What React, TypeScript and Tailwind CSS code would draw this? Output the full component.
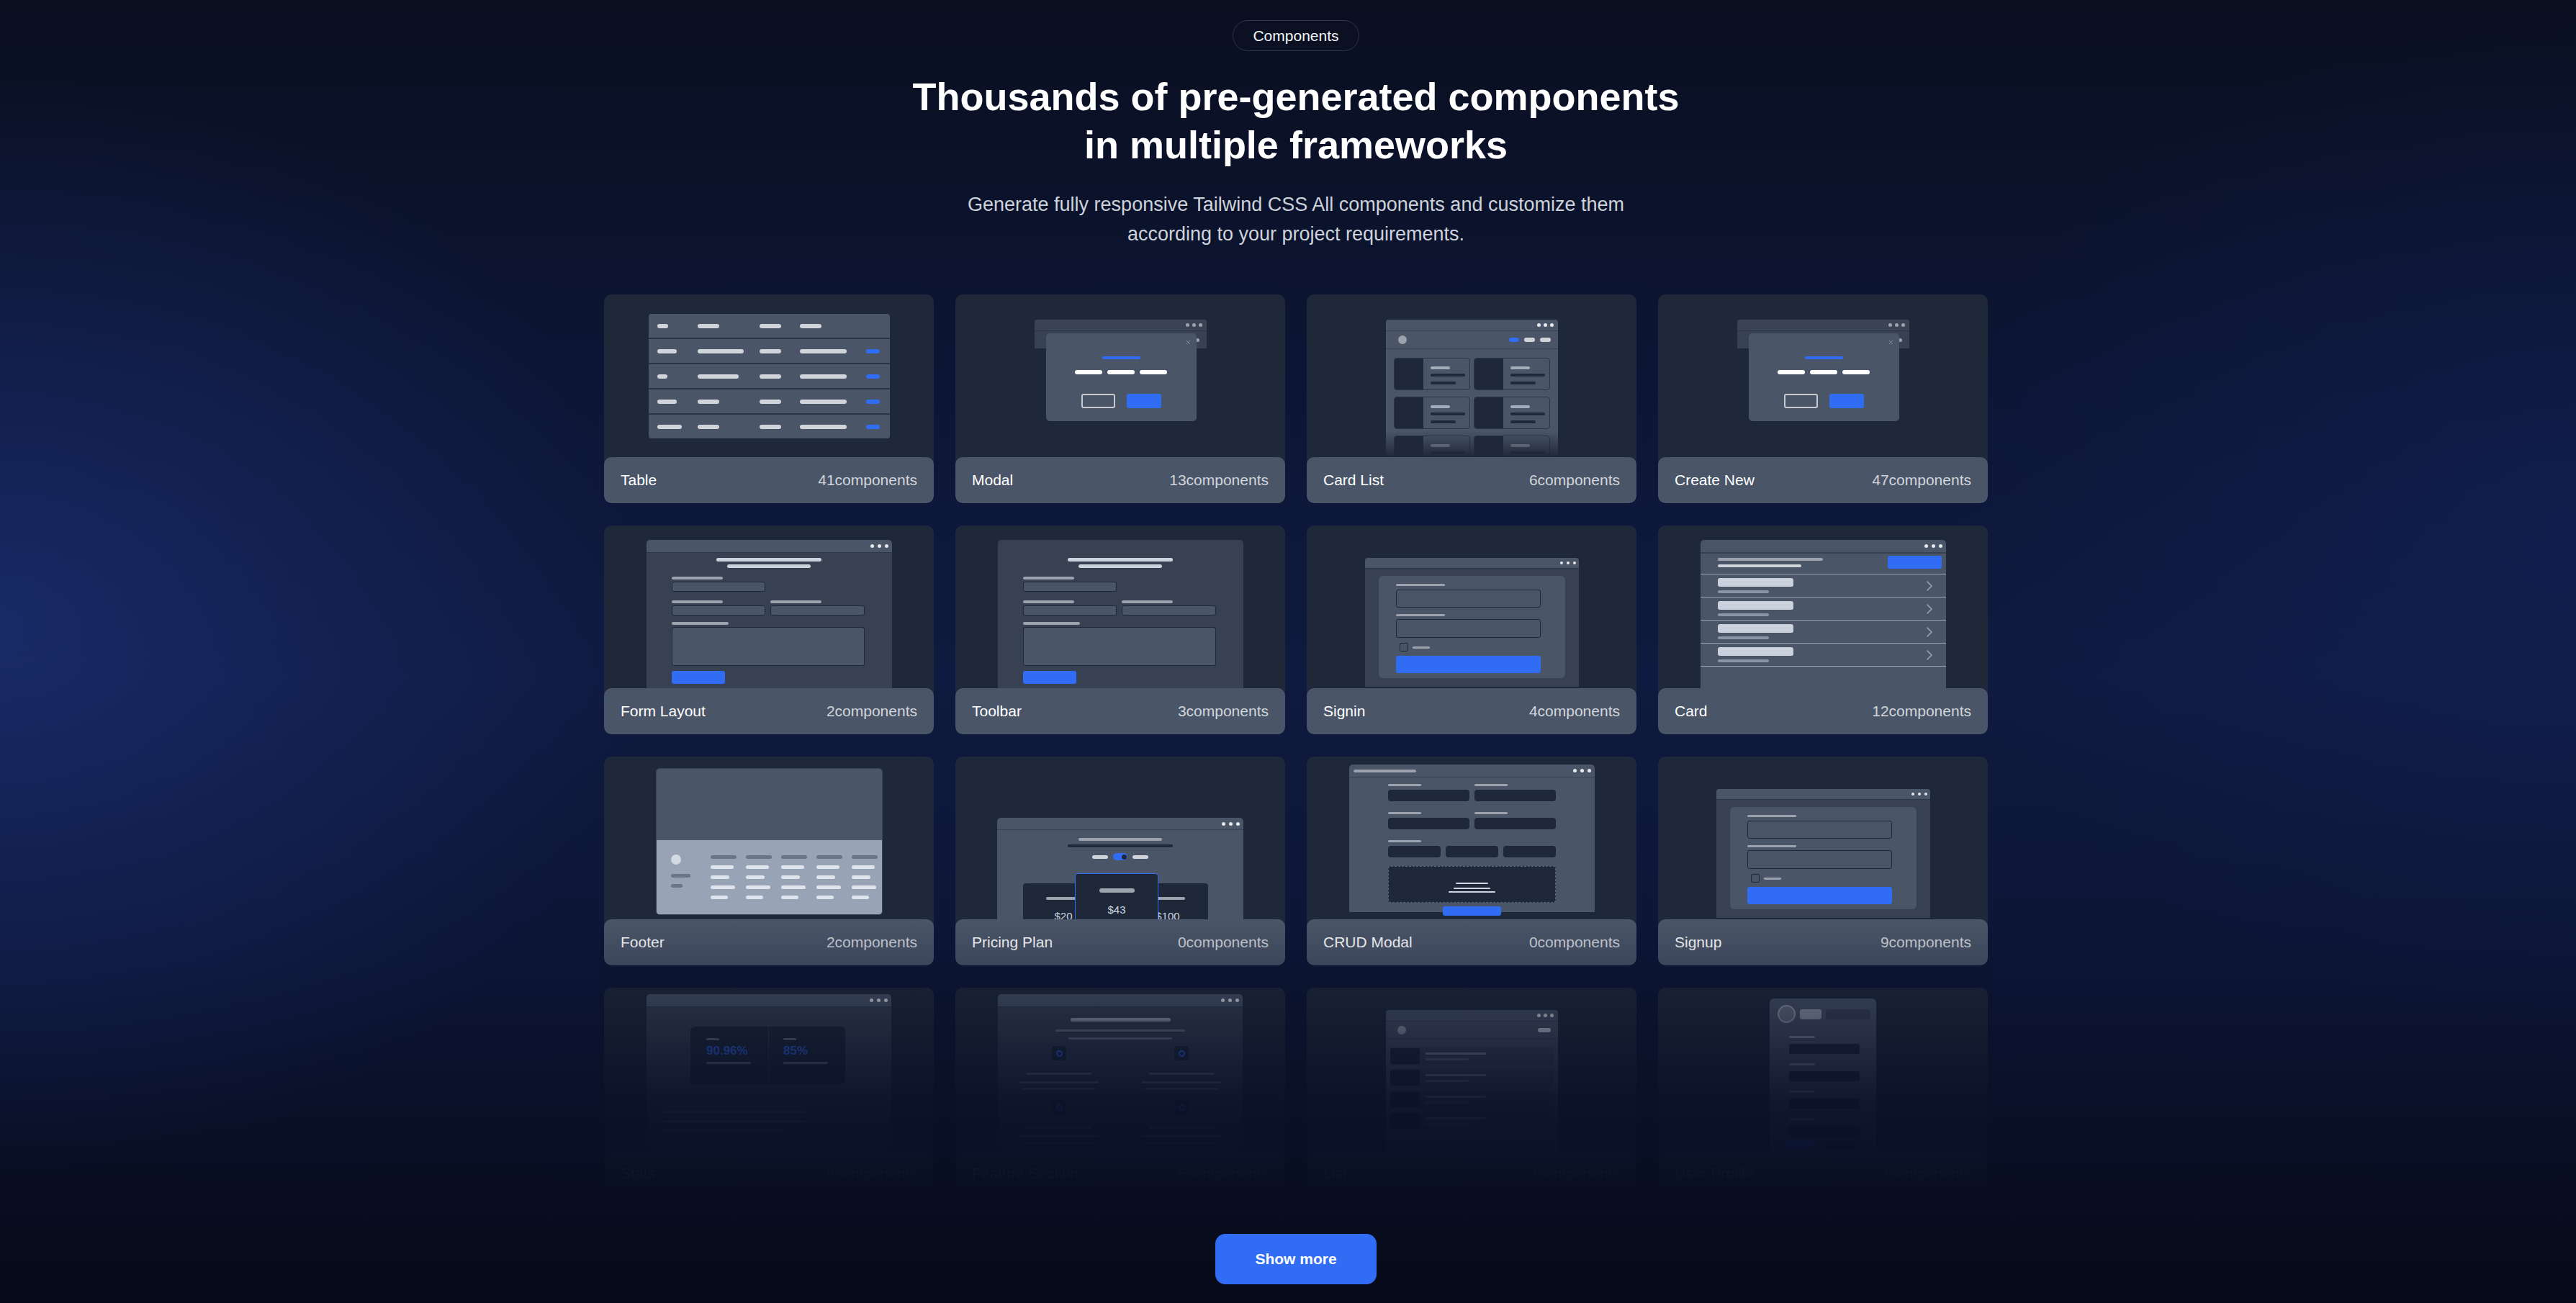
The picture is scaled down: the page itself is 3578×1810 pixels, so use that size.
import type { ReactNode } from 'react';
import { ChevronRight, X } from 'lucide-react';

function TitleBar({ className, dot }: { className: string; dot: string }) {
  return (
    <div className={`flex shrink-0 items-center justify-end ${className}`}>
      <span className={`rounded-full ${dot}`} />
      <span className={`rounded-full ${dot}`} />
      <span className={`rounded-full ${dot}`} />
    </div>
  );
}

function Card({ name, count, children }: { name: string; count: number; children: ReactNode }) {
  return (
    <div className="flex h-[290px] flex-col overflow-hidden rounded-[10px] bg-[#1f2838]">
      <div className="relative h-[226px] shrink-0 overflow-hidden">{children}</div>
      <div className="flex h-[64px] items-center justify-between rounded-[10px] bg-[#4a5568] px-[23px] text-[21px]">
        <span className="text-white">{name}</span>
        <span className="text-[#d1d5db]">{count}components</span>
      </div>
    </div>
  );
}

const tableRows = [
  ['w-[15px]', 'w-[30px]', 'w-[30px]', 'w-[30px]', ''],
  ['w-[27px]', 'w-[64px]', 'w-[30px]', 'w-[65px]', 'w-[19px]'],
  ['w-[14px]', 'w-[57px]', 'w-[30px]', 'w-[65px]', 'w-[19px]'],
  ['w-[27px]', 'w-[30px]', 'w-[30px]', 'w-[65px]', 'w-[19px]'],
  ['w-[34px]', 'w-[30px]', 'w-[30px]', 'w-[65px]', 'w-[19px]'],
];

function TablePreview() {
  return (
    <div className="flex justify-center pt-[27px]">
      <div className="flex w-[335px] flex-col gap-[2px] overflow-hidden rounded-[4px] bg-[#2b3444]">
        {tableRows.map((row, i) => (
          <div key={i} className="grid h-[33px] grid-cols-[56px_86px_56px_92px_1fr] items-center bg-[#4a5568] pl-[12px]">
            {row.map((w, j) => (
              <span key={j} className={w ? `h-[6px] rounded-full ${j === 4 ? 'bg-[#316cf4]' : 'bg-[#d1d5db]'} ${w}` : ''} />
            ))}
          </div>
        ))}
      </div>
    </div>
  );
}

function ModalPreview() {
  return (
    <div className="pt-[35px]">
      <div className="relative mx-auto w-[239px]">
        <div className="overflow-hidden rounded-t-[4px] bg-[#374151]">
          <TitleBar className="h-[15px] gap-[4px] bg-[#3a4354] pr-[6px]" dot="h-[5px] w-[5px] bg-[#9ca3af]" />
          <div className="h-px bg-[#2b3444]" />
          <div className="flex h-[24px] justify-end pr-[10px] pt-[10px]">
            <span className="h-[5px] w-[5px] rounded-full bg-[#9ca3af]" />
          </div>
        </div>
        <div className="absolute left-[16px] top-[19px] flex h-[122px] w-[209px] flex-col items-center rounded-[5px] bg-[#4a5568] pt-[32px]">
          <X className="absolute right-[7px] top-[8px] h-[9px] w-[9px] text-[#9ca3af]" strokeWidth={2} />
          <span className="h-[4px] w-[53px] rounded-full bg-[#316cf4]" />
          <div className="mt-[15px] flex gap-[7px]">
            <span className="h-[6px] w-[38px] rounded-full bg-white" />
            <span className="h-[6px] w-[38px] rounded-full bg-white" />
            <span className="h-[6px] w-[38px] rounded-full bg-white" />
          </div>
          <div className="mt-[27px] flex gap-[16px]">
            <span className="h-[20px] w-[47px] rounded-[3px] border-2 border-[#c5cad3]" />
            <span className="h-[20px] w-[48px] rounded-[3px] bg-[#316cf4]" />
          </div>
        </div>
      </div>
    </div>
  );
}

function MiniCard() {
  return (
    <div className="flex h-[45px] overflow-hidden rounded-[4px] border border-[#2d3646] bg-[#4a5568]">
      <div className="w-[40px] shrink-0 bg-[#1f2838]" />
      <div className="flex flex-col pl-[10px] pt-[11px]">
        <span className="h-[4px] w-[27px] rounded-full bg-[#a3acb9]" />
        <span className="mt-[6px] h-[4px] w-[48px] rounded-full bg-[#1f2838]" />
        <span className="mt-[7px] h-[4px] w-[35px] rounded-full bg-[#1f2838]" />
      </div>
    </div>
  );
}

function CardListPreview() {
  return (
    <div className="h-full pt-[35px]">
      <div className="mx-auto w-[239px] overflow-hidden rounded-t-[4px] bg-[#4a5568]">
        <TitleBar className="h-[15px] gap-[4px] pr-[6px]" dot="h-[5px] w-[5px] bg-[#e5e7eb]" />
        <div className="h-px bg-[#374151]" />
        <div className="flex h-[24px] items-center justify-between pl-[17px] pr-[10px]">
          <span className="h-[12px] w-[12px] rounded-full bg-[#9ca3af]" />
          <div className="flex gap-[7px]">
            <span className="h-[6px] w-[14px] rounded-full bg-[#316cf4]" />
            <span className="h-[6px] w-[15px] rounded-full bg-[#d1d5db]" />
            <span className="h-[6px] w-[15px] rounded-full bg-[#d1d5db]" />
          </div>
        </div>
        <div className="h-px bg-[#374151]" />
        <div className="grid grid-cols-2 gap-x-[5px] gap-y-[9px] px-[11px] pt-[12px]">
          <MiniCard />
          <MiniCard />
          <MiniCard />
          <MiniCard />
          <MiniCard />
          <MiniCard />
        </div>
      </div>
      <div className="absolute inset-x-0 bottom-0 h-[36px] bg-linear-to-b from-transparent to-[#1f2838]" />
    </div>
  );
}

function FormPreview({ titled }: { titled: boolean }) {
  return (
    <div className="pt-[20px]">
      <div className="mx-auto h-[240px] w-[341px] overflow-hidden rounded-t-[5px] bg-[#374151]">
        {titled && (
          <>
            <TitleBar className="h-[17px] gap-[5px] bg-[#4a5568] pr-[5px]" dot="h-[5px] w-[5px] bg-[#e5e7eb]" />
            <div className="h-px bg-[#2d3646]" />
          </>
        )}
        <div className={`flex flex-col items-center ${titled ? 'pt-[7px]' : 'pt-[25px]'}`}>
          <span className="h-[5px] w-[146px] rounded-full bg-[#cbd2dc]" />
          <span className="mt-[4px] h-[5px] w-[116px] rounded-full bg-[#cbd2dc]" />
        </div>
        <div className="flex flex-col pl-[35px]">
          <span className="mt-[12px] h-[4px] w-[71px] rounded-full bg-[#9ca3af]" />
          <span className="mt-[3px] h-[14px] w-[130px] rounded-[3px] border border-[#1f2838] bg-[#4a5568]" />
          <div className="mt-[12px] flex gap-[7px]">
            <span className="h-[4px] w-[71px] rounded-full bg-[#9ca3af]" />
            <span className="ml-[59px] h-[4px] w-[71px] rounded-full bg-[#9ca3af]" />
          </div>
          <div className="mt-[3px] flex gap-[7px]">
            <span className="h-[14px] w-[130px] rounded-[3px] border border-[#1f2838] bg-[#4a5568]" />
            <span className="h-[14px] w-[131px] rounded-[3px] border border-[#1f2838] bg-[#4a5568]" />
          </div>
          <span className="mt-[9px] h-[4px] w-[79px] rounded-full bg-[#9ca3af]" />
          <span className="mt-[3px] h-[54px] w-[268px] rounded-[3px] border border-[#1f2838] bg-[#4a5568]" />
          <span className="mt-[7px] h-[18px] w-[74px] rounded-[3px] bg-[#316cf4]" />
        </div>
      </div>
    </div>
  );
}

function SigninPreview() {
  return (
    <div className="pt-[45px]">
      <div className="mx-auto w-[297px] overflow-hidden rounded-t-[4px] bg-[#374151]">
        <TitleBar className="h-[14px] gap-[5px] bg-[#4a5568] pr-[4px]" dot="h-[4px] w-[4px] bg-[#e5e7eb]" />
        <div className="h-px bg-[#2d3646]" />
        <div className="h-[164px] pl-[19px] pt-[10px]">
          <div className="flex h-[142px] w-[259px] flex-col rounded-[6px] bg-[#4a5568] pl-[24px] pt-[11px]">
            <span className="h-[3px] w-[68px] rounded-full bg-[#9ca3af]" />
            <span className="mt-[5px] h-[25px] w-[201px] rounded-[3px] border border-[#1f2838]" />
            <span className="mt-[9px] h-[3px] w-[68px] rounded-full bg-[#9ca3af]" />
            <span className="mt-[4px] h-[26px] w-[201px] rounded-[3px] border border-[#1f2838]" />
            <div className="mt-[7px] flex items-center gap-[6px] pl-[5px]">
              <span className="h-[12px] w-[12px] rounded-[2px] border border-[#1f2838]" />
              <span className="h-[3px] w-[24px] rounded-full bg-[#9ca3af]" />
            </div>
            <span className="mt-[6px] h-[24px] w-[201px] rounded-[3px] bg-[#316cf4]" />
          </div>
        </div>
      </div>
    </div>
  );
}

function ListRow() {
  return (
    <>
      <div className="flex h-[31px] items-center justify-between pl-[24px] pr-[11px]">
        <div className="flex flex-col">
          <span className="h-[12px] w-[105px] rounded-[3px] bg-[#cbd2de]" />
          <span className="mt-[5px] h-[4px] w-[71px] rounded-full bg-[#8b95a5]" />
        </div>
        <ChevronRight className="h-[24px] w-[24px] text-[#9ca3af]" strokeWidth={1.6} />
      </div>
      <div className="h-px bg-[#9aa3b1]" />
    </>
  );
}

function CardPreview() {
  return (
    <div className="pt-[20px]">
      <div className="mx-auto h-[215px] w-[341px] overflow-hidden rounded-t-[5px] bg-[#4a5568]">
        <TitleBar className="h-[17px] gap-[5px] pr-[5px]" dot="h-[5px] w-[5px] bg-[#e5e7eb]" />
        <div className="h-[2px] bg-[#374151]" />
        <div className="flex h-[28px] items-start justify-between pl-[24px] pr-[6px]">
          <div className="flex flex-col pt-[6px]">
            <span className="h-[4px] w-[146px] rounded-full bg-[#9ca3af]" />
            <span className="mt-[5px] h-[4px] w-[116px] rounded-full bg-[#d1d5db]" />
          </div>
          <span className="mt-[3px] h-[18px] w-[75px] rounded-[3px] bg-[#316cf4]" />
        </div>
        <div className="h-px bg-[#9aa3b1]" />
        <ListRow />
        <ListRow />
        <ListRow />
        <ListRow />
      </div>
    </div>
  );
}

const footerCols = ['w-[32px]', 'w-[26px]', 'w-[34px]', 'w-[24px]'];

function FooterPreview() {
  return (
    <div className="pt-[16px]">
      <div className="mx-auto w-[315px] overflow-hidden rounded-[5px] border border-[#3b4556]">
        <div className="h-[99px] bg-[#4a5568]" />
        <div className="flex h-[103px] bg-[#98a3b5] pl-[20px] pt-[20px]">
          <div className="flex w-[55px] shrink-0 flex-col">
            <span className="h-[14px] w-[14px] rounded-full bg-[#d4dae3]" />
            <span className="mt-[13px] h-[5px] w-[27px] rounded-full bg-[#6b7585]" />
            <span className="mt-[9px] h-[5px] w-[16px] rounded-full bg-[#6b7585]" />
          </div>
          {[0, 1, 2, 3, 4].map((c) => (
            <div key={c} className="flex w-[49px] shrink-0 flex-col pt-[1px]">
              <span className="h-[5px] w-[36px] rounded-full bg-[#6b7585]" />
              {footerCols.map((w, i) => (
                <span key={i} className={`mt-[9px] h-[5px] rounded-full bg-[#dfe4ec] ${w}`} />
              ))}
            </div>
          ))}
        </div>
      </div>
    </div>
  );
}

function PricingPreview() {
  return (
    <div className="pt-[85px]">
      <div className="mx-auto h-[160px] w-[342px] overflow-hidden rounded-t-[5px] bg-[#4a5568]">
        <TitleBar className="h-[16px] gap-[5px] pr-[5px]" dot="h-[5px] w-[5px] bg-[#e5e7eb]" />
        <div className="h-px bg-[#374151]" />
        <div className="flex flex-col items-center pt-[11px]">
          <span className="h-[4px] w-[116px] rounded-full bg-[#9ca3af]" />
          <span className="mt-[5px] h-[4px] w-[146px] rounded-full bg-[#1f2838]" />
          <div className="mt-[8px] flex items-center gap-[7px]">
            <span className="h-[5px] w-[22px] rounded-full bg-[#d1d5db]" />
            <span className="flex h-[10px] w-[20px] items-center justify-end rounded-full bg-[#316cf4] pr-[1px]">
              <span className="h-[7px] w-[7px] rounded-full bg-[#1f2838]" />
            </span>
            <span className="h-[5px] w-[22px] rounded-full bg-[#d1d5db]" />
          </div>
        </div>
        <div className="relative mt-[18px] h-[90px] text-[15px] leading-none text-[#cbd5e1]">
          <div className="absolute left-[36px] top-[14px] flex h-[90px] w-[112px] flex-col items-center rounded-t-[4px] bg-[#1f2838] pt-[19px]">
            <span className="h-[4px] w-[48px] rounded-full bg-[#9ca3af]" />
            <span className="mt-[15px]">$20</span>
          </div>
          <div className="absolute left-[181px] top-[14px] flex h-[90px] w-[112px] flex-col items-center rounded-t-[4px] bg-[#1f2838] pt-[19px]">
            <span className="h-[4px] w-[48px] rounded-full bg-[#9ca3af]" />
            <span className="mt-[15px]">$100</span>
          </div>
          <div className="absolute left-[108px] top-0 z-10 flex h-[90px] w-[116px] flex-col items-center rounded-t-[4px] border border-[#316cf4] bg-[#1f2838] pt-[20px]">
            <span className="h-[6px] w-[49px] rounded-full bg-[#9ca3af]" />
            <span className="mt-[16px]">$43</span>
          </div>
        </div>
      </div>
    </div>
  );
}

function CrudField() {
  return (
    <div className="flex flex-col">
      <span className="h-[3px] w-[46px] rounded-full bg-[#9ca3af]" />
      <span className="mt-[5px] h-[16px] rounded-[4px] bg-[#1f2838]" />
    </div>
  );
}

function CrudPreview() {
  return (
    <div className="pt-[11px]">
      <div className="mx-auto h-[205px] w-[341px] overflow-hidden rounded-t-[5px] bg-[#4a5568]">
        <div className="flex h-[17px] items-center justify-between pl-[6px] pr-[5px]">
          <span className="h-[4px] w-[87px] rounded-full bg-[#9ca3af]" />
          <div className="flex gap-[5px]">
            <span className="h-[5px] w-[5px] rounded-full bg-[#e5e7eb]" />
            <span className="h-[5px] w-[5px] rounded-full bg-[#e5e7eb]" />
            <span className="h-[5px] w-[5px] rounded-full bg-[#e5e7eb]" />
          </div>
        </div>
        <div className="h-px bg-[#374151]" />
        <div className="flex flex-col px-[54px] pt-[9px]">
          <div className="grid grid-cols-2 gap-x-[7px]">
            <CrudField />
            <CrudField />
          </div>
          <div className="mt-[15px] grid grid-cols-2 gap-x-[7px]">
            <CrudField />
            <CrudField />
          </div>
          <span className="mt-[15px] h-[3px] w-[46px] rounded-full bg-[#9ca3af]" />
          <div className="mt-[5px] grid grid-cols-3 gap-x-[7px]">
            <span className="h-[16px] rounded-[4px] bg-[#1f2838]" />
            <span className="h-[16px] rounded-[4px] bg-[#1f2838]" />
            <span className="h-[16px] rounded-[4px] bg-[#1f2838]" />
          </div>
          <div className="mt-[12px] flex h-[51px] flex-col items-center rounded-[4px] border border-dashed border-[#5b6576] bg-[#1f2838] pt-[22px]">
            <span className="h-[2px] w-[45px] rounded-full bg-[#cbd5e1]" />
            <span className="mt-[5px] h-[2px] w-[51px] rounded-full bg-[#cbd5e1]" />
            <span className="mt-[3px] h-[2px] w-[65px] rounded-full bg-[#cbd5e1]" />
          </div>
        </div>
      </div>
      <span className="absolute left-[189px] top-[208px] h-[13px] w-[81px] rounded-[3px] bg-[#316cf4]" />
    </div>
  );
}

function StatsPreview() {
  return (
    <div className="pt-[9px]">
      <div className="mx-auto h-[230px] w-[340px] overflow-hidden rounded-t-[5px] bg-[#374151]">
        <TitleBar className="h-[17px] gap-[5px] bg-[#4a5568] pr-[5px]" dot="h-[5px] w-[5px] bg-[#e5e7eb]" />
        <div className="h-px bg-[#2d3646]" />
        <div className="flex flex-col pl-[23px] pt-[27px]">
          <div className="ml-[38px] flex h-[80px] w-[215px] rounded-[6px] bg-[#1f2838]">
            <div className="flex flex-1 flex-col pl-[22px] pt-[16px]">
              <span className="h-[3px] w-[18px] rounded-full bg-[#6b7585]" />
              <span className="mt-[6px] text-[17px] font-bold leading-none text-[#316cf4]">90.96%</span>
              <span className="mt-[7px] h-[3px] w-[62px] rounded-full bg-[#6b7585]" />
            </div>
            <div className="w-px bg-[#374151]" />
            <div className="flex flex-1 flex-col pl-[20px] pt-[16px]">
              <span className="h-[3px] w-[18px] rounded-full bg-[#6b7585]" />
              <span className="mt-[6px] text-[17px] font-bold leading-none text-[#316cf4]">85%</span>
              <span className="mt-[7px] h-[3px] w-[62px] rounded-full bg-[#6b7585]" />
            </div>
          </div>
          <span className="mt-[37px] h-[3px] w-[198px] rounded-full bg-[#6b7585]" />
          <span className="mt-[10px] h-[3px] w-[198px] rounded-full bg-[#6b7585]" />
          <span className="mt-[9px] h-[3px] w-[165px] rounded-full bg-[#6b7585]" />
        </div>
      </div>
    </div>
  );
}

function FeatureItem() {
  return (
    <div className="flex flex-col items-center">
      <span className="flex h-[20px] w-[20px] items-center justify-center rounded-[4px] bg-[#1f2838]">
        <span className="h-[9px] w-[9px] rounded-full border-2 border-[#316cf4]" />
      </span>
      <span className="mt-[17px] h-[3px] w-[90px] rounded-full bg-[#6b7585]" />
      <span className="mt-[9px] h-[3px] w-[110px] rounded-full bg-[#6b7585]" />
      <span className="mt-[6px] h-[3px] w-[100px] rounded-full bg-[#6b7585]" />
    </div>
  );
}

function FeaturePreview() {
  return (
    <div className="pt-[9px]">
      <div className="mx-auto h-[230px] w-[340px] overflow-hidden rounded-t-[5px] bg-[#374151]">
        <TitleBar className="h-[17px] gap-[5px] bg-[#4a5568] pr-[5px]" dot="h-[5px] w-[5px] bg-[#e5e7eb]" />
        <div className="h-px bg-[#2d3646]" />
        <div className="flex flex-col items-center pt-[15px]">
          <span className="h-[5px] w-[139px] rounded-full bg-[#9ca3af]" />
          <span className="mt-[11px] h-[3px] w-[180px] rounded-full bg-[#6b7585]" />
          <span className="mt-[8px] h-[3px] w-[144px] rounded-full bg-[#6b7585]" />
        </div>
        <div className="mt-[9px] grid grid-cols-2 gap-y-[14px]">
          <FeatureItem />
          <FeatureItem />
          <FeatureItem />
          <FeatureItem />
        </div>
      </div>
    </div>
  );
}

function ListItem() {
  return (
    <div className="flex h-[26px] items-center gap-[8px] rounded-[3px] bg-[#3f4a5c]">
      <span className="h-[22px] w-[41px] rounded-[3px] bg-[#1f2838]" />
      <div className="flex flex-col gap-[5px]">
        <span className="h-[3px] w-[84px] rounded-full bg-[#8b95a5]" />
        <span className="h-[3px] w-[60px] rounded-full bg-[#6b7585]" />
      </div>
    </div>
  );
}

function ListPreview() {
  return (
    <div className="pt-[31px]">
      <div className="mx-auto h-[200px] w-[239px] overflow-hidden rounded-t-[4px] bg-[#4a5568]">
        <TitleBar className="h-[15px] gap-[4px] pr-[6px]" dot="h-[5px] w-[5px] bg-[#e5e7eb]" />
        <div className="h-px bg-[#374151]" />
        <div className="flex h-[24px] items-center justify-between pl-[16px] pr-[10px]">
          <span className="h-[12px] w-[12px] rounded-full bg-[#9ca3af]" />
          <span className="h-[6px] w-[18px] rounded-full bg-[#d1d5db]" />
        </div>
        <div className="h-px bg-[#374151]" />
        <div className="flex flex-col gap-[4px] px-[6px] pt-[10px]">
          <ListItem />
          <ListItem />
          <ListItem />
          <ListItem />
        </div>
      </div>
    </div>
  );
}

function ProfileField() {
  return (
    <div className="flex flex-col">
      <span className="h-[3px] w-[36px] rounded-full bg-[#8b95a5]" />
      <span className="mt-[8px] h-[14px] w-[98px] rounded-[3px] bg-[#1f2838]" />
    </div>
  );
}

function ProfilePreview() {
  return (
    <div className="pt-[15px]">
      <div className="mx-auto h-[215px] w-[148px] overflow-hidden rounded-[6px] bg-[#4a5568]">
        <div className="flex items-center gap-[6px] pl-[11px] pt-[9px]">
          <span className="h-[25px] w-[25px] rounded-full border-2 border-[#9ca3af] bg-[#6b7585]" />
          <span className="h-[14px] w-[30px] rounded-[3px] bg-[#9ca3af]" />
          <span className="h-[14px] w-[62px] rounded-[3px] bg-[#3b4556]" />
        </div>
        <div className="flex flex-col gap-[13px] pl-[27px] pt-[18px]">
          <ProfileField />
          <ProfileField />
          <ProfileField />
          <ProfileField />
        </div>
        <div className="flex gap-[14px] pl-[22px] pt-[6px]">
          <span className="h-[12px] w-[41px] rounded-[3px] bg-[#316cf4]" />
          <span className="h-[12px] w-[41px] rounded-[3px] bg-[#1f2838]" />
        </div>
      </div>
    </div>
  );
}

export default function App() {
  return (
    <div className="min-h-screen w-full bg-[radial-gradient(ellipse_900px_760px_at_0%_48%,rgba(36,62,150,0.45),transparent),radial-gradient(ellipse_900px_700px_at_100%_40%,rgba(24,44,120,0.3),transparent),linear-gradient(180deg,#0a0f20_0%,#0c1534_28%,#0f1a40_52%,#0c1535_74%,#080d20_92%,#060a18_100%)] font-['Liberation_Sans',Arial,sans-serif] text-white">
      <section className="flex flex-col items-center pb-[25px] pl-[22px] pt-[28px]">
        <span className="flex h-[43px] items-center rounded-full border border-[#2e374b] bg-[#0b1122] px-[27px] text-[21px] text-[#f3f4f6]">
          Components
        </span>
        <h1 className="mt-[30px] text-center text-[54px] font-bold leading-[67px] text-white">
          Thousands of pre-generated components
          <br />
          in multiple frameworks
        </h1>
        <p className="mt-[29px] text-center text-[27px] leading-[41px] text-[#cdd2db]">
          Generate fully responsive Tailwind CSS All components and customize them
          <br />
          according to your project requirements.
        </p>

        <div className="relative mt-[63px]">
          <div className="grid grid-cols-[repeat(4,458px)] gap-x-[30px] gap-y-[31px]">
            <Card name="Table" count={41}><TablePreview /></Card>
            <Card name="Modal" count={13}><ModalPreview /></Card>
            <Card name="Card List" count={6}><CardListPreview /></Card>
            <Card name="Create New" count={47}><ModalPreview /></Card>

            <Card name="Form Layout" count={2}><FormPreview titled /></Card>
            <Card name="Toolbar" count={3}><FormPreview titled={false} /></Card>
            <Card name="Signin" count={4}><SigninPreview /></Card>
            <Card name="Card" count={12}><CardPreview /></Card>

            <Card name="Footer" count={2}><FooterPreview /></Card>
            <Card name="Pricing Plan" count={0}><PricingPreview /></Card>
            <Card name="CRUD Modal" count={0}><CrudPreview /></Card>
            <Card name="Signup" count={9}><SigninPreview /></Card>

            <Card name="Stats" count={8}><StatsPreview /></Card>
            <Card name="Feature Section" count={5}><FeaturePreview /></Card>
            <Card name="List" count={7}><ListPreview /></Card>
            <Card name="User Profile" count={3}><ProfilePreview /></Card>
          </div>
          {/* fade over the last row */}
          <div className="pointer-events-none absolute inset-x-[-6px] bottom-[-2px] h-[385px] bg-linear-to-b from-transparent via-[#0a1128]/90 via-65% to-[#080d20]" />
        </div>

        <button className="mt-[52px] flex h-[70px] w-[224px] items-center justify-center rounded-[14px] bg-[#316cf4] text-[21px] font-bold text-white">
          Show more
        </button>
      </section>
    </div>
  );
}
